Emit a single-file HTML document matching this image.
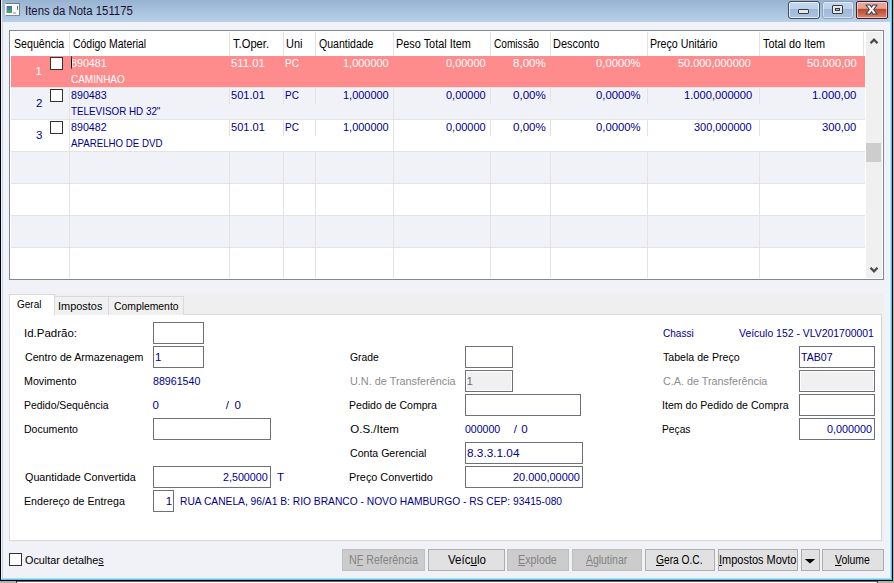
<!DOCTYPE html>
<html><head><meta charset="utf-8">
<style>
*{margin:0;padding:0;box-sizing:border-box}
html,body{width:894px;height:583px;overflow:hidden;background:#f0f0f0}
body{position:relative;font-family:"Liberation Sans",sans-serif;font-size:11px;color:#000}
div,span{position:absolute}
.t{white-space:nowrap;line-height:13px;height:13px;font-size:11.5px}
.b{color:#00008e}
.g{color:#8d8d8d}
.w{color:#ffffff}
.r{text-align:right}
.cb{width:13px;height:13px;border:1px solid #333;background:#fff}
.in{height:22px;border:1px solid #6e7079;background:#fff}
.dis{background:#f0f0f0;box-shadow:inset 0 0 0 1px #fff}
.sep{width:1px;background:#e2e2e2}
.rs{height:1px;background:#e3e3e3}
.btn{top:549px;height:22px;border:1px solid #adadad;background:#e1e1e1;text-align:center;line-height:20px;white-space:nowrap;font-size:11px}
.btn.d{background:#cccccc;border-color:#bfbfbf}
.t.d{color:#838383}
u{text-decoration:underline}
</style></head><body>
<!-- outside -->
<div style="left:0;top:581px;width:16px;height:2px;background:#b0b0b0"></div>
<div style="left:16px;top:581px;width:1px;height:2px;background:#3a3a3a"></div>
<div style="left:17px;top:581px;width:860px;height:1px;background:#6a6060"></div>
<div style="left:17px;top:582px;width:860px;height:1px;background:#fbfbfd"></div>
<div style="left:877px;top:581px;width:1px;height:2px;background:#3a3a3a"></div>
<div style="left:878px;top:581px;width:16px;height:2px;background:#b0b0b0"></div>
<div style="left:893px;top:0;width:1px;height:583px;background:#b3b3b3"></div>
<!-- window frame -->
<div style="left:0;top:0;width:893px;height:581px;background:#000"></div>
<div style="left:1px;top:0;width:891px;height:580px;background:#3ed0f4"></div>
<div style="left:1px;top:0;width:890px;height:579px;background:#f0f4fa"></div>
<div style="left:2px;top:0;width:889px;height:579px;background:#c4d4ec"></div>
<div style="left:890px;top:0;width:1px;height:22px;background:#9fe0f6"></div>
<!-- title bar -->
<div style="left:2px;top:0;width:888px;height:22px;background:linear-gradient(#98b3d1,#b9d1ea)"></div>
<!-- client -->
<div style="left:3px;top:22px;width:887px;height:556px;background:#f1f2f8"></div>

<!-- title icon -->
<div style="left:5px;top:3px;width:15px;height:13px;background:#fafafa;border-top:1px solid #777;border-right:1px solid #808080;border-bottom:1px solid #8a8a8a;border-left:1px solid #f4f4f4"></div>
<div style="left:6px;top:6px;width:1px;height:7px;background:#c8b8e0"></div>
<div style="left:7px;top:6px;width:5px;height:7px;background:linear-gradient(#3d6db2,#4cb350)"></div>
<div style="left:13px;top:12px;width:3px;height:2px;background:#c4c4c4"></div>
<div style="left:17px;top:6px;width:1px;height:4px;background:linear-gradient(#3868b0,#50b450)"></div>
<div class="t" style="left:25px;top:3px;font-size:12px;line-height:16px;height:16px;color:#1a1030;transform:scaleX(0.947);transform-origin:0 0">Itens da Nota 151175</div>

<!-- window buttons -->
<div style="left:788px;top:1px;width:32px;height:18px;border:1px solid #3d4b63;border-radius:3px;background:linear-gradient(#c3d7ee 0,#bcd2ea 45%,#9fb9d8 46%,#aac3e0 100%);box-shadow:inset 0 0 0 1px rgba(255,255,255,.7)"></div>
<div style="left:798px;top:9px;width:11px;height:5px;background:#e8e8e0;border:1px solid #333a4c;border-radius:1px"></div>
<div style="left:822px;top:1px;width:32px;height:18px;border:1px solid #8aa2c0;border-radius:3px;background:linear-gradient(#c3d7ee 0,#bcd2ea 45%,#9fb9d8 46%,#aac3e0 100%);box-shadow:inset 0 0 0 1px rgba(255,255,255,.5)"></div>
<div style="left:832px;top:5px;width:11px;height:9px;background:#e8e8e0;border:1px solid #333a4c;border-radius:1px"></div>
<div style="left:835px;top:8px;width:5px;height:3px;background:#9fb9d8;border:1px solid #333a4c"></div>
<div style="left:856px;top:1px;width:32px;height:18px;border:1px solid #4a1a24;border-radius:2px;background:linear-gradient(#e9ab9b 0,#e3a08f 40%,#c2462a 44%,#c85a3f 65%,#d68a72 100%);box-shadow:inset 0 0 0 1px rgba(255,235,225,.6)"></div>
<svg style="position:absolute;left:865px;top:4px" width="14" height="11" viewBox="0 0 14 11"><path d="M1 1 L5 1 L6.5 3.3 L8 1 L12 1 L8.7 5.5 L12 10 L8 10 L6.5 7.7 L5 10 L1 10 L4.3 5.5 Z" fill="#f6f6f6" stroke="#3a4152" stroke-width="1.1" stroke-linejoin="round"/></svg>

<!-- GRID -->
<div style="left:9px;top:30px;width:875px;height:250px;border:1px solid #828790;background:#fff"></div>
<div style="left:69px;top:32px;width:1px;height:24px;background:#e3e3e3"></div>
<div style="left:229px;top:32px;width:1px;height:24px;background:#e3e3e3"></div>
<div style="left:283px;top:32px;width:1px;height:24px;background:#e3e3e3"></div>
<div style="left:315px;top:32px;width:1px;height:24px;background:#e3e3e3"></div>
<div style="left:393px;top:32px;width:1px;height:24px;background:#e3e3e3"></div>
<div style="left:490px;top:32px;width:1px;height:24px;background:#e3e3e3"></div>
<div style="left:550px;top:32px;width:1px;height:24px;background:#e3e3e3"></div>
<div style="left:647px;top:32px;width:1px;height:24px;background:#e3e3e3"></div>
<div style="left:759px;top:32px;width:1px;height:24px;background:#e3e3e3"></div>
<div style="left:863px;top:32px;width:1px;height:24px;background:#e3e3e3"></div>
<div class="t " style="left:13.50px;top:38px;transform:scaleX(0.8860);transform-origin:0 0;font-size:12px;">Sequência</div>
<div class="t " style="left:72.50px;top:38px;transform:scaleX(0.8702);transform-origin:0 0;font-size:12px;">Código Material</div>
<div class="t " style="left:232.50px;top:38px;transform:scaleX(0.9316);transform-origin:0 0;font-size:12px;">T.Oper.</div>
<div class="t " style="left:286.09px;top:38px;transform:scaleX(0.9118);transform-origin:0 0;font-size:12px;">Uni</div>
<div class="t " style="left:318.60px;top:38px;transform:scaleX(0.8774);transform-origin:0 0;font-size:12px;">Quantidade</div>
<div class="t " style="left:395.69px;top:38px;transform:scaleX(0.9074);transform-origin:0 0;font-size:12px;">Peso Total Item</div>
<div class="t " style="left:493.70px;top:38px;transform:scaleX(0.8434);transform-origin:0 0;font-size:12px;">Comissão</div>
<div class="t " style="left:552.79px;top:38px;transform:scaleX(0.9120);transform-origin:0 0;font-size:12px;">Desconto</div>
<div class="t " style="left:649.71px;top:38px;transform:scaleX(0.8853);transform-origin:0 0;font-size:12px;">Preço Unitário</div>
<div class="t " style="left:762.90px;top:38px;transform:scaleX(0.9044);transform-origin:0 0;font-size:12px;">Total do Item</div>
<div style="left:11px;top:56px;width:854px;height:31px;background:#ff8c8c"></div>
<div style="left:11px;top:87px;width:854px;height:1px;background:#e3e3e3"></div>
<div style="left:11px;top:88px;width:854px;height:31px;background:#f1f1f8"></div>
<div style="left:11px;top:119px;width:854px;height:1px;background:#e3e3e3"></div>
<div style="left:69px;top:88px;width:1px;height:31px;background:#e3e3e3"></div>
<div style="left:229px;top:88px;width:1px;height:16px;background:#e3e3e3"></div>
<div style="left:283px;top:88px;width:1px;height:16px;background:#e3e3e3"></div>
<div style="left:315px;top:88px;width:1px;height:16px;background:#e3e3e3"></div>
<div style="left:393px;top:88px;width:1px;height:31px;background:#e3e3e3"></div>
<div style="left:490px;top:88px;width:1px;height:16px;background:#e3e3e3"></div>
<div style="left:550px;top:88px;width:1px;height:16px;background:#e3e3e3"></div>
<div style="left:647px;top:88px;width:1px;height:16px;background:#e3e3e3"></div>
<div style="left:759px;top:88px;width:1px;height:16px;background:#e3e3e3"></div>
<div style="left:11px;top:120px;width:854px;height:31px;background:#ffffff"></div>
<div style="left:11px;top:151px;width:854px;height:1px;background:#e3e3e3"></div>
<div style="left:69px;top:120px;width:1px;height:31px;background:#e3e3e3"></div>
<div style="left:229px;top:120px;width:1px;height:16px;background:#e3e3e3"></div>
<div style="left:283px;top:120px;width:1px;height:16px;background:#e3e3e3"></div>
<div style="left:315px;top:120px;width:1px;height:16px;background:#e3e3e3"></div>
<div style="left:393px;top:120px;width:1px;height:31px;background:#e3e3e3"></div>
<div style="left:490px;top:120px;width:1px;height:16px;background:#e3e3e3"></div>
<div style="left:550px;top:120px;width:1px;height:16px;background:#e3e3e3"></div>
<div style="left:647px;top:120px;width:1px;height:16px;background:#e3e3e3"></div>
<div style="left:759px;top:120px;width:1px;height:16px;background:#e3e3e3"></div>
<div style="left:11px;top:152px;width:854px;height:31px;background:#f1f1f8"></div>
<div style="left:11px;top:183px;width:854px;height:1px;background:#e3e3e3"></div>
<div style="left:69px;top:152px;width:1px;height:31px;background:#e3e3e3"></div>
<div style="left:229px;top:152px;width:1px;height:31px;background:#e3e3e3"></div>
<div style="left:283px;top:152px;width:1px;height:31px;background:#e3e3e3"></div>
<div style="left:315px;top:152px;width:1px;height:31px;background:#e3e3e3"></div>
<div style="left:393px;top:152px;width:1px;height:31px;background:#e3e3e3"></div>
<div style="left:490px;top:152px;width:1px;height:31px;background:#e3e3e3"></div>
<div style="left:550px;top:152px;width:1px;height:31px;background:#e3e3e3"></div>
<div style="left:647px;top:152px;width:1px;height:31px;background:#e3e3e3"></div>
<div style="left:759px;top:152px;width:1px;height:31px;background:#e3e3e3"></div>
<div style="left:11px;top:184px;width:854px;height:31px;background:#ffffff"></div>
<div style="left:11px;top:215px;width:854px;height:1px;background:#e3e3e3"></div>
<div style="left:69px;top:184px;width:1px;height:31px;background:#e3e3e3"></div>
<div style="left:229px;top:184px;width:1px;height:31px;background:#e3e3e3"></div>
<div style="left:283px;top:184px;width:1px;height:31px;background:#e3e3e3"></div>
<div style="left:315px;top:184px;width:1px;height:31px;background:#e3e3e3"></div>
<div style="left:393px;top:184px;width:1px;height:31px;background:#e3e3e3"></div>
<div style="left:490px;top:184px;width:1px;height:31px;background:#e3e3e3"></div>
<div style="left:550px;top:184px;width:1px;height:31px;background:#e3e3e3"></div>
<div style="left:647px;top:184px;width:1px;height:31px;background:#e3e3e3"></div>
<div style="left:759px;top:184px;width:1px;height:31px;background:#e3e3e3"></div>
<div style="left:11px;top:216px;width:854px;height:31px;background:#f1f1f8"></div>
<div style="left:11px;top:247px;width:854px;height:1px;background:#e3e3e3"></div>
<div style="left:69px;top:216px;width:1px;height:31px;background:#e3e3e3"></div>
<div style="left:229px;top:216px;width:1px;height:31px;background:#e3e3e3"></div>
<div style="left:283px;top:216px;width:1px;height:31px;background:#e3e3e3"></div>
<div style="left:315px;top:216px;width:1px;height:31px;background:#e3e3e3"></div>
<div style="left:393px;top:216px;width:1px;height:31px;background:#e3e3e3"></div>
<div style="left:490px;top:216px;width:1px;height:31px;background:#e3e3e3"></div>
<div style="left:550px;top:216px;width:1px;height:31px;background:#e3e3e3"></div>
<div style="left:647px;top:216px;width:1px;height:31px;background:#e3e3e3"></div>
<div style="left:759px;top:216px;width:1px;height:31px;background:#e3e3e3"></div>
<div style="left:11px;top:248px;width:854px;height:30px;background:#ffffff"></div>
<div style="left:69px;top:248px;width:1px;height:30px;background:#e3e3e3"></div>
<div style="left:229px;top:248px;width:1px;height:30px;background:#e3e3e3"></div>
<div style="left:283px;top:248px;width:1px;height:30px;background:#e3e3e3"></div>
<div style="left:315px;top:248px;width:1px;height:30px;background:#e3e3e3"></div>
<div style="left:393px;top:248px;width:1px;height:30px;background:#e3e3e3"></div>
<div style="left:490px;top:248px;width:1px;height:30px;background:#e3e3e3"></div>
<div style="left:550px;top:248px;width:1px;height:30px;background:#e3e3e3"></div>
<div style="left:647px;top:248px;width:1px;height:30px;background:#e3e3e3"></div>
<div style="left:759px;top:248px;width:1px;height:30px;background:#e3e3e3"></div>
<div class="t w" style="left:35.55px;top:65px;transform:scaleX(1.0000);transform-origin:0 0;">1</div>
<div style="left:50px;top:57px;width:13px;height:13px;border:1px solid #333;background:#fff"></div>
<div class="t w" style="left:71.00px;top:57px;transform:scaleX(0.9289);transform-origin:0 0;">890481</div>
<div class="t w" style="left:71.00px;top:73px;transform:scaleX(0.8677);transform-origin:0 0;">CAMINHAO</div>
<div class="t w" style="left:231.20px;top:57px;transform:scaleX(0.9882);transform-origin:0 0;">511.01</div>
<div class="t w" style="left:284.53px;top:57px;transform:scaleX(0.8667);transform-origin:0 0;">PC</div>
<div class="t w" style="left:343.45px;top:57px;transform:scaleX(0.9532);transform-origin:0 0;">1,000000</div>
<div class="t w" style="left:446.40px;top:57px;transform:scaleX(0.9548);transform-origin:0 0;">0,00000</div>
<div class="t w" style="left:513.40px;top:57px;transform:scaleX(1.0061);transform-origin:0 0;">8,00%</div>
<div class="t w" style="left:595.50px;top:57px;transform:scaleX(0.9804);transform-origin:0 0;">0,0000%</div>
<div class="t w" style="left:678.30px;top:57px;transform:scaleX(0.9494);transform-origin:0 0;">50.000,000000</div>
<div class="t w" style="left:806.60px;top:57px;transform:scaleX(0.9725);transform-origin:0 0;">50.000,00</div>
<div class="t b" style="left:36.10px;top:97px;transform:scaleX(1.0000);transform-origin:0 0;">2</div>
<div style="left:50px;top:89px;width:13px;height:13px;border:1px solid #333;background:#fff"></div>
<div class="t b" style="left:71.00px;top:89px;transform:scaleX(0.9289);transform-origin:0 0;">890483</div>
<div class="t b" style="left:71.00px;top:105px;transform:scaleX(0.8558);transform-origin:0 0;">TELEVISOR HD 32&quot;</div>
<div class="t b" style="left:231.20px;top:89px;transform:scaleX(0.9600);transform-origin:0 0;">501.01</div>
<div class="t b" style="left:284.53px;top:89px;transform:scaleX(0.8667);transform-origin:0 0;">PC</div>
<div class="t b" style="left:343.45px;top:89px;transform:scaleX(0.9532);transform-origin:0 0;">1,000000</div>
<div class="t b" style="left:446.40px;top:89px;transform:scaleX(0.9548);transform-origin:0 0;">0,00000</div>
<div class="t b" style="left:513.40px;top:89px;transform:scaleX(1.0061);transform-origin:0 0;">0,00%</div>
<div class="t b" style="left:595.50px;top:89px;transform:scaleX(0.9804);transform-origin:0 0;">0,0000%</div>
<div class="t b" style="left:683.53px;top:89px;transform:scaleX(0.9696);transform-origin:0 0;">1.000,000000</div>
<div class="t b" style="left:811.51px;top:89px;transform:scaleX(0.9932);transform-origin:0 0;">1.000,00</div>
<div class="t b" style="left:36.10px;top:129px;transform:scaleX(1.0000);transform-origin:0 0;">3</div>
<div style="left:50px;top:121px;width:13px;height:13px;border:1px solid #333;background:#fff"></div>
<div class="t b" style="left:71.00px;top:121px;transform:scaleX(0.9289);transform-origin:0 0;">890482</div>
<div class="t b" style="left:71.00px;top:137px;transform:scaleX(0.8435);transform-origin:0 0;">APARELHO DE DVD</div>
<div class="t b" style="left:231.20px;top:121px;transform:scaleX(0.9600);transform-origin:0 0;">501.01</div>
<div class="t b" style="left:284.53px;top:121px;transform:scaleX(0.8667);transform-origin:0 0;">PC</div>
<div class="t b" style="left:343.45px;top:121px;transform:scaleX(0.9532);transform-origin:0 0;">1,000000</div>
<div class="t b" style="left:446.40px;top:121px;transform:scaleX(0.9548);transform-origin:0 0;">0,00000</div>
<div class="t b" style="left:513.40px;top:121px;transform:scaleX(1.0061);transform-origin:0 0;">0,00%</div>
<div class="t b" style="left:595.50px;top:121px;transform:scaleX(0.9804);transform-origin:0 0;">0,0000%</div>
<div class="t b" style="left:693.50px;top:121px;transform:scaleX(0.9492);transform-origin:0 0;">300,000000</div>
<div class="t b" style="left:822.00px;top:121px;transform:scaleX(0.9771);transform-origin:0 0;">300,00</div>
<div style="left:71px;top:56px;width:1px;height:13px;background:linear-gradient(#0e7070,#000 40%,#000 70%,#0e7070)"></div>
<div style="left:866px;top:32px;width:16px;height:246px;background:#f0f0f0"></div>
<div style="left:866px;top:143px;width:15px;height:19px;background:#cdcdcd"></div>
<svg style="position:absolute;left:868.6px;top:37px" width="10" height="8" viewBox="0 0 10 8"><path d="M1.5 6.2 L5 2.6 L8.5 6.2" fill="none" stroke="#4a4a4a" stroke-width="2.3"/></svg>
<svg style="position:absolute;left:868.6px;top:266px" width="10" height="8" viewBox="0 0 10 8"><path d="M1.5 1.8 L5 5.4 L8.5 1.8" fill="none" stroke="#4a4a4a" stroke-width="2.3"/></svg>
<div style="left:9px;top:294px;width:875px;height:248px;background:#efefef"></div>
<div style="left:9px;top:314px;width:873px;height:227px;border:1px solid #d9d9d9;background:#fff"></div>
<div style="left:9px;top:294px;width:46px;height:21px;border:1px solid #d9d9d9;border-bottom:none;background:#fff"></div>
<div style="left:54px;top:296px;width:55px;height:19px;border:1px solid #d9d9d9;border-bottom:none;background:#f0f0f0"></div>
<div style="left:108px;top:296px;width:76px;height:19px;border:1px solid #d9d9d9;border-bottom:none;background:#f0f0f0"></div>
<div style="left:10px;top:314px;width:44px;height:1px;background:#fff"></div>
<div class="t " style="left:16.70px;top:298px;transform:scaleX(0.8679);transform-origin:0 0;">Geral</div>
<div class="t " style="left:57.85px;top:300px;transform:scaleX(0.9522);transform-origin:0 0;">Impostos</div>
<div class="t " style="left:114.30px;top:300px;transform:scaleX(0.9014);transform-origin:0 0;">Complemento</div>
<div class="t " style="left:23.70px;top:327px;transform:scaleX(0.9980);transform-origin:0 0;">Id.Padrão:</div>
<div style="left:153px;top:322px;width:51px;height:22px;border:1px solid #6e7079;background:#fff"></div>
<div class="t " style="left:24.70px;top:351px;transform:scaleX(0.9258);transform-origin:0 0;">Centro de Armazenagem</div>
<div style="left:153px;top:346px;width:51px;height:22px;border:1px solid #6e7079;background:#fff"></div>
<div class="t b" style="left:154.95px;top:351px;transform:scaleX(1.0000);transform-origin:0 0;">1</div>
<div class="t " style="left:23.77px;top:375px;transform:scaleX(0.9309);transform-origin:0 0;">Movimento</div>
<div class="t b" style="left:153.00px;top:375px;transform:scaleX(0.9255);transform-origin:0 0;">88961540</div>
<div class="t " style="left:23.79px;top:399px;transform:scaleX(0.9054);transform-origin:0 0;">Pedido/Sequência</div>
<div class="t b" style="left:152.45px;top:399px;transform:scaleX(1.0000);transform-origin:0 0;">0</div>
<div class="t b" style="left:225.75px;top:399px;transform:scaleX(1.0000);transform-origin:0 0;">/</div>
<div class="t b" style="left:234.60px;top:399px;transform:scaleX(1.0000);transform-origin:0 0;">0</div>
<div class="t " style="left:23.78px;top:423px;transform:scaleX(0.9172);transform-origin:0 0;">Documento</div>
<div style="left:153px;top:418px;width:118px;height:22px;border:1px solid #6e7079;background:#fff"></div>
<div class="t " style="left:24.70px;top:471px;transform:scaleX(0.9370);transform-origin:0 0;">Quantidade Convertida</div>
<div style="left:153px;top:466px;width:118px;height:22px;border:1px solid #6e7079;background:#fff"></div>
<div class="t b" style="left:223.30px;top:471px;transform:scaleX(0.9312);transform-origin:0 0;">2,500000</div>
<div class="t b" style="left:276.95px;top:471px;transform:scaleX(1.0000);transform-origin:0 0;">T</div>
<div class="t " style="left:23.77px;top:495px;transform:scaleX(0.9278);transform-origin:0 0;">Endereço de Entrega</div>
<div style="left:153px;top:490px;width:21px;height:22px;border:1px solid #6e7079;background:#fff"></div>
<div class="t b" style="left:165.75px;top:495px;transform:scaleX(1.0000);transform-origin:0 0;">1</div>
<div class="t b" style="left:179.81px;top:495px;transform:scaleX(0.8909);transform-origin:0 0;">RUA CANELA, 96/A1 B: RIO BRANCO - NOVO HAMBURGO - RS CEP: 93415-080</div>
<div class="t " style="left:350.30px;top:351px;transform:scaleX(0.9000);transform-origin:0 0;">Grade</div>
<div style="left:465px;top:346px;width:48px;height:22px;border:1px solid #6e7079;background:#fff"></div>
<div class="t g" style="left:350.30px;top:375px;transform:scaleX(0.9446);transform-origin:0 0;">U.N. de Transferência</div>
<div style="left:465px;top:370px;width:48px;height:22px;border:1px solid #6e7079;background:#f0f0f0;box-shadow:inset 0 0 0 1px #fff"></div>
<div class="t " style="left:466.50px;top:375px;transform:scaleX(1.0000);transform-origin:0 0;color:#6d6d6d;">1</div>
<div class="t " style="left:349.38px;top:399px;transform:scaleX(0.9168);transform-origin:0 0;">Pedido de Compra</div>
<div style="left:465px;top:394px;width:116px;height:22px;border:1px solid #6e7079;background:#fff"></div>
<div class="t " style="left:350.30px;top:423px;transform:scaleX(1.0000);transform-origin:0 0;">O.S./Item</div>
<div class="t b" style="left:464.90px;top:423px;transform:scaleX(0.9184);transform-origin:0 0;">000000</div>
<div class="t b" style="left:513.85px;top:423px;transform:scaleX(1.0000);transform-origin:0 0;">/</div>
<div class="t b" style="left:521.30px;top:423px;transform:scaleX(1.0000);transform-origin:0 0;">0</div>
<div class="t " style="left:350.30px;top:447px;transform:scaleX(0.9193);transform-origin:0 0;">Conta Gerencial</div>
<div style="left:465px;top:442px;width:118px;height:22px;border:1px solid #6e7079;background:#fff"></div>
<div class="t b" style="left:466.70px;top:447px;transform:scaleX(1.0255);transform-origin:0 0;">8.3.3.1.04</div>
<div class="t " style="left:349.36px;top:471px;transform:scaleX(0.9432);transform-origin:0 0;">Preço Convertido</div>
<div style="left:465px;top:466px;width:118px;height:22px;border:1px solid #6e7079;background:#fff"></div>
<div class="t b" style="left:513.40px;top:471px;transform:scaleX(0.9514);transform-origin:0 0;">20.000,00000</div>
<div class="t b" style="left:662.90px;top:327px;transform:scaleX(0.8743);transform-origin:0 0;">Chassi</div>
<div class="t b" style="left:738.70px;top:327px;transform:scaleX(0.9067);transform-origin:0 0;">Veículo 152 - VLV201700001</div>
<div class="t " style="left:662.90px;top:351px;transform:scaleX(0.9217);transform-origin:0 0;">Tabela de Preço</div>
<div style="left:799px;top:346px;width:76px;height:22px;border:1px solid #6e7079;background:#fff"></div>
<div class="t b" style="left:801.00px;top:351px;transform:scaleX(0.9206);transform-origin:0 0;">TAB07</div>
<div class="t g" style="left:662.90px;top:375px;transform:scaleX(0.9384);transform-origin:0 0;">C.A. de Transferência</div>
<div style="left:799px;top:370px;width:76px;height:22px;border:1px solid #6e7079;background:#f0f0f0;box-shadow:inset 0 0 0 1px #fff"></div>
<div class="t " style="left:661.98px;top:399px;transform:scaleX(0.9212);transform-origin:0 0;">Item do Pedido de Compra</div>
<div style="left:799px;top:394px;width:76px;height:22px;border:1px solid #6e7079;background:#fff"></div>
<div class="t " style="left:662.01px;top:423px;transform:scaleX(0.8903);transform-origin:0 0;">Peças</div>
<div style="left:799px;top:418px;width:76px;height:22px;border:1px solid #6e7079;background:#fff"></div>
<div class="t b" style="left:827.40px;top:423px;transform:scaleX(0.9375);transform-origin:0 0;">0,000000</div>
<div style="left:9px;top:553px;width:13px;height:13px;border:1px solid #333;background:#fff"></div>
<div class="t " style="left:24.70px;top:554px;transform:scaleX(0.9405);transform-origin:0 0;">Ocultar detalhe<u>s</u></div>
<div class="btn d" style="left:342px;width:83px"></div>
<div class="t d" style="left:349.01px;top:554px;transform:scaleX(0.8896);transform-origin:0 0;font-size:12px;">N<u>F</u> Referência</div>
<div class="btn" style="left:428px;width:77px"></div>
<div class="t " style="left:448.20px;top:554px;transform:scaleX(0.9641);transform-origin:0 0;font-size:12px;">Veíc<u>u</u>lo</div>
<div class="btn d" style="left:507px;width:62px"></div>
<div class="t d" style="left:518.40px;top:554px;transform:scaleX(0.8952);transform-origin:0 0;font-size:12px;"><u>E</u>xplode</div>
<div class="btn d" style="left:572px;width:70px"></div>
<div class="t d" style="left:585.60px;top:554px;transform:scaleX(0.8687);transform-origin:0 0;font-size:12px;"><u>A</u>glutinar</div>
<div class="btn" style="left:645px;width:70px"></div>
<div class="t " style="left:656.30px;top:554px;transform:scaleX(0.8519);transform-origin:0 0;font-size:12px;"><u>G</u>era O.C.</div>
<div class="btn" style="left:718px;width:80px"></div>
<div class="t " style="left:718.79px;top:554px;transform:scaleX(0.9143);transform-origin:0 0;font-size:12px;"><u>I</u>mpostos Movto</div>
<div class="btn" style="left:801px;width:19px"></div>
<svg style="position:absolute;left:804px;top:559px" width="12" height="6" viewBox="0 0 12 6"><path d="M0.8 0 L11.2 0 L6 4.6 Z" fill="#000"/></svg>
<div class="btn" style="left:822px;width:62px"></div>
<div class="t " style="left:835.30px;top:554px;transform:scaleX(0.8700);transform-origin:0 0;font-size:12px;"><u>V</u>olume</div>
</body></html>
